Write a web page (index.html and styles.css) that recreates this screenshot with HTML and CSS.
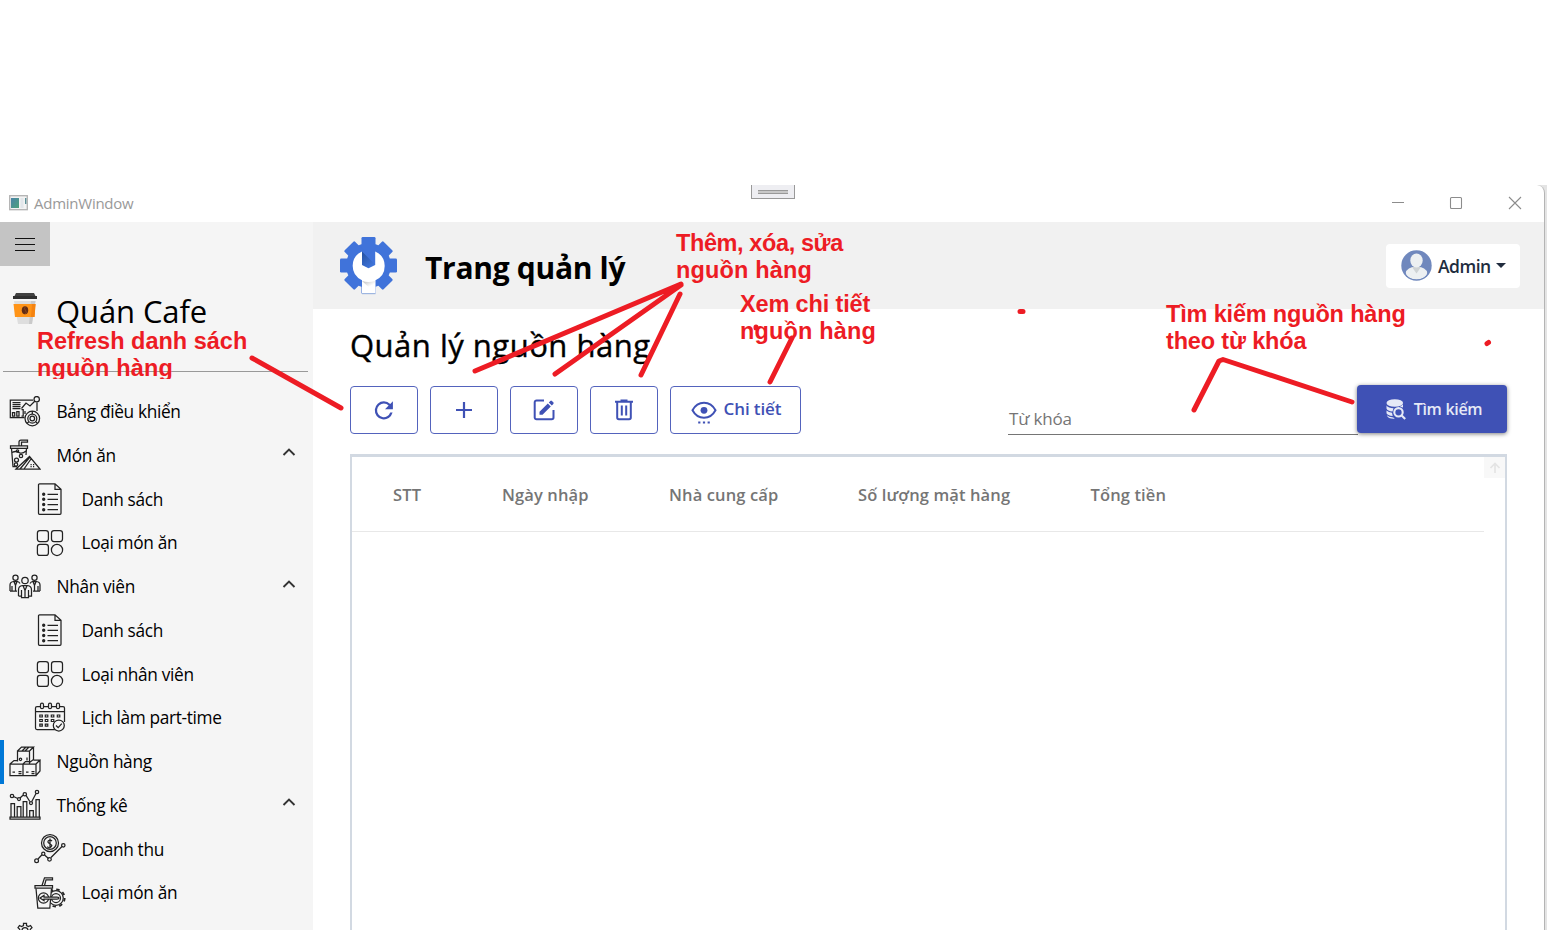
FILE: index.html
```html
<!DOCTYPE html>
<html lang="vi">
<head>
<meta charset="utf-8">
<title>AdminWindow</title>
<link rel="stylesheet" href="styles.css">
</head>
<body>
<svg class="defs" width="0" height="0">
  <symbol id="list" viewBox="0 0 32 32"><path d="M5.500.8H21l6 5.500V30.300a1 1 0 0 1-1 1H5.500a1 1 0 0 1-1-1V1.800a1 1 0 0 1 1-1ZM21 .8V6.300h6"/><path d="M13.500 11.300h10.500M13.500 16.300h10.500M13.500 21.500h10.500M13.500 26.700h10.500"/><g stroke-width="1.600"><circle cx="9.700" cy="11.300" r=".9"/><circle cx="9.700" cy="16.300" r=".9"/><circle cx="9.700" cy="21.500" r=".9"/><circle cx="9.700" cy="26.700" r=".9"/></g></symbol>
  <symbol id="grid" viewBox="0 0 32 32"><rect x="3.400" y="3.600" width="11" height="11" rx="2.500"/><rect x="17.500" y="3.600" width="11" height="11" rx="2.500"/><rect x="3.400" y="17.400" width="11" height="11" rx="2.500"/><circle cx="23" cy="22.900" r="5.600"/></symbol>
  <symbol id="up" viewBox="0 0 14 10"><path d="M1.500 8 7 2.500 12.500 8"/></symbol>
</svg>

<div class="window">
  <div class="titlebar">
    <svg class="appicon" width="19" height="16" viewBox="0 0 19 16"><defs><linearGradient id="ai" x2="1" y2="1"><stop stop-color="#4a83a8"/><stop offset="1" stop-color="#4da27a"/></linearGradient></defs><rect x=".7" y=".7" width="17.600" height="14" fill="#f3f3f3" stroke="#b2b2b2" stroke-width="1.300"/><rect x="2" y="3" width="8" height="10" fill="url(#ai)"/><rect x="11.500" y="3" width="3" height="10" fill="#e2e6ea"/><rect x="16" y="3" width="1.400" height="6" fill="#5c9097"/></svg>
    <span class="wname">AdminWindow</span>
    <div class="controls">
      <svg width="14" height="14" viewBox="0 0 14 14"><path d="M1 6.500h12"/></svg>
      <svg width="14" height="14" viewBox="0 0 14 14"><rect x="1.500" y="1.500" width="11" height="11" rx="1"/></svg>
      <svg width="14" height="14" viewBox="0 0 14 14"><path d="m1 1 12 12M13 1 1 13"/></svg>
    </div>
    <div class="grip"><i></i></div>
  </div>

  <div class="body">
    <aside class="sidebar">
      <div class="burger"><i></i><i></i><i></i></div>
      <div class="brand">
        <svg width="26" height="34" viewBox="0 0 26 34"><path d="M2 9h21.500L20 32H6Z" fill="#dedede"/><path d="M19 9h4.500L20 32h-3Z" fill="#cacaca"/><path d="M1.500 12h22l-1 13H3Z" fill="#ff9418"/><path d="M20 12h3.500l-1 13h-3.500Z" fill="#f58310"/><path d="M4 1h18l1.500 3H25v3H1V4h1.500Z" fill="#414141"/><path d="M1 4h24v3H1Z" fill="#303030"/><ellipse cx="13" cy="18.300" rx="3.200" ry="4" fill="#622c14"/><path d="M13.500 14.500q-2 2 0 4t-.5 3.700" stroke="#8f4a22" fill="none" stroke-width=".8"/></svg>
        <span>Quán Cafe</span>
      </div>
      <hr>
      <nav>
        <div class="item">
          <svg class="ico" viewBox="0 0 32 32"><path d="M15.500 21.700H1.300V4H24M28 6.500V15M3.500 6.500h8M3.500 8.500h8M3.500 10.500h8M3.500 12.500h8M12.500 12.500 17 7l4 3 5-5"/><path d="M3.500 16.500h2.200v3.500H3.500ZM7.800 15.500H10V20H7.800ZM12.500 13.500h1.700V20h-1.700M16 15v3" /><circle cx="27.700" cy="3.200" r="2.700"/><circle cx="23.300" cy="22.500" r="7.300"/><circle cx="23.300" cy="22.500" r="4.500"/><circle cx="23.300" cy="22.500" r="2.300"/><path d="M23.300 15v3M18 27.500l2-2M28.500 27.500l-2-2"/></svg>
          <span>Bảng điều khiển</span>
        </div>
        <div class="item">
          <svg class="ico" viewBox="0 0 32 32"><path d="M1.500 6.800h17v2.500h-17ZM2.500 9.500 4 27.500h4M17.500 9.500 17 16M10 6.500V3q0-2 2-2h6.500v2h-6v3.500M3 13.500q4-2 7 0t7-1.500M7 30 20.500 17.500 31 30ZM11 30l10-12M15 30l7-10"/><circle cx="7.500" cy="21" r="2"/><circle cx="12" cy="17" r="1.700"/><circle cx="7" cy="25.500" r="1.700"/><circle cx="8.500" cy="12" r="1.200"/><path stroke-dasharray="1.200 1.300" d="M21.500 25.500h5M21.500 27.500h5"/></svg>
          <span>Món ăn</span><svg class="chev"><use href="#up"/></svg>
        </div>
        <div class="item sub"><svg class="ico"><use href="#list"/></svg><span>Danh sách</span></div>
        <div class="item sub"><svg class="ico"><use href="#grid"/></svg><span>Loại món ăn</span></div>
        <div class="item">
          <svg class="ico" viewBox="0 0 32 32"><circle cx="6.500" cy="6.800" r="2.600"/><circle cx="25.500" cy="6.800" r="2.600"/><circle cx="16" cy="9.500" r="3.200"/><path d="M1 20v-6q0-3 3.500-3.500h4q1.500.4 2.500 2M31 20v-6q0-3-3.500-3.500h-4q-1.500.4-2.500 2M1 20h2v-5M31 20h-2v-5M3 20h5M29 20h-5M9.500 25v-6q0-4 4-4.500h5q4 .5 4 4.500v6h-3v-6M9.500 25h3v-6M12.500 25v1.500h7V25M14 14.500l2 5 2-5M16 19.500V26M5 10.500l1.500 4 1.500-4M24 10.500l1.500 4 1.500-4M6.500 14v6M25.500 14v6"/></svg>
          <span>Nhân viên</span><svg class="chev"><use href="#up"/></svg>
        </div>
        <div class="item sub"><svg class="ico"><use href="#list"/></svg><span>Danh sách</span></div>
        <div class="item sub"><svg class="ico"><use href="#grid"/></svg><span>Loại nhân viên</span></div>
        <div class="item sub">
          <svg class="ico" viewBox="0 0 32 32"><path d="M22 27.500H3q-1.500 0-1.500-1.500V6q0-1.500 1.500-1.500h3M10 4.500h4M18 4.500h4M26 4.500h3q1.500 0 1.500 1.500v14M1.500 9.500h29"/><rect x="6.500" y="1.200" width="3" height="5.500" rx="1.500"/><rect x="14.500" y="1.200" width="3" height="5.500" rx="1.500"/><rect x="22.500" y="1.200" width="3" height="5.500" rx="1.500"/><g stroke-width="1.200"><path d="M5.800 13h2.500v2H5.800ZM11.300 13h2.500v2h-2.500ZM17.300 13h2.500v2h-2.500ZM23.300 13h2.500v2h-2.500ZM5.800 17.500h2.500v2H5.800ZM11.300 17.500h2.500v2h-2.500ZM17.300 17.500h2.500v2h-2.500ZM5.800 22.200h2.500v2H5.800ZM11.300 22.200h2.500v2h-2.500Z"/></g><circle cx="24.800" cy="23.500" r="5.500" fill="#f5f5f5"/><path d="m22 23.500 2.200 2.200 3.600-4"/></svg>
          <span>Lịch làm part-time</span>
        </div>
        <div class="item active">
          <svg class="ico" viewBox="0 0 32 32"><path d="M8.500 15.500V5h12v12.500M8.500 5l4-4h12l-4 4M24.500 1v12.500l-4 3M13 5l4-4M16 5l4-4M1 18h13v11.500H1ZM14 18h13v11.500H14ZM1 18l4-3.500h3.500M14 18l2.500-2.500h4M27 18l4-4h-6.500M31 14v11l-4 4.500"/><path d="M3.500 26H6M9.500 25.500h3M9.500 27.500h3M17 26h2.500M22.500 25.500h3M22.500 27.500h3M18 11.500v3"/><circle cx="11.500" cy="13.300" r="1.200"/></svg>
          <span>Nguồn hàng</span>
        </div>
        <div class="item">
          <svg class="ico" viewBox="0 0 32 32"><path d="M1 28h30v2H1ZM2 27.500V14.500h3.500v13M8.200 27.500v-10h3.700v10M14.200 27.500v-15h3.600v15M20.700 27.500v-6h3.600v6M27 27.500v-17h3.300v17M4.500 7.500 8.700 9.500M11 9l3-2.800M17 6.300 20.800 12.500M22.800 12.500 27 4.500"/><circle cx="3" cy="7" r="1.700"/><circle cx="10" cy="10" r="1.500"/><circle cx="15.800" cy="5.200" r="1.700"/><circle cx="22" cy="14" r="1.500"/><circle cx="28" cy="3" r="1.700"/></svg>
          <span>Thống kê</span><svg class="chev"><use href="#up"/></svg>
        </div>
        <div class="item sub">
          <svg class="ico" viewBox="0 0 32 32"><circle cx="16" cy="10" r="8.500"/><circle cx="16" cy="10" r="6.300"/><path d="M18 8q-1.500-1.500-3.200-.5t0 2.500 2.700 2-1 2.200-3-.7M16 5.500v9M4 26l4-4.200M10.500 22l4 3.500M17 24.500 28 13.500"/><circle cx="2.600" cy="27.700" r="1.900"/><circle cx="9.300" cy="20.800" r="1.600"/><circle cx="15.500" cy="26.300" r="1.800"/><circle cx="29.300" cy="12.300" r="1.700"/></svg>
          <span>Doanh thu</span>
        </div>
        <div class="item sub">
          <svg class="ico" viewBox="0 0 32 32"><circle cx="22" cy="21" r="8.700" stroke-width="1.800" stroke-dasharray="3.400 3.430"/><circle cx="22" cy="21" r="7.300"/><circle cx="22" cy="21" r="4.500"/><path fill="#f5f5f5" d="M2 11.500l1.800 19.700h12L17.500 11.500"/><path fill="#f5f5f5" d="M1 8.700h17.500v2.500H1Z"/><path d="M8 8.500l2.500-7.700h8v2h-6.500L10.500 8.500"/><circle cx="9.500" cy="21" r="5.200"/><path fill="#f5f5f5" d="m6 21 4-2.500v1.500h13q2 0 2 1t-2 1H10v1.500Z"/></svg>
          <span>Loại món ăn</span>
        </div>
        <div class="item">
          <svg class="ico last" viewBox="0 0 32 32"><path d="M14.500 3.500V1.300h3v2.200l2 1 2-1 1.500 2.200-1.700 1.500v2.500L23 11l-1.700 2.500-2-1-1.800 1.300v2h-3v-2l-1.800-1.300-2 1L9 11l1.700-1.300V7.200L9 5.700l1.500-2.200 2 1Z"/><circle cx="16" cy="8.500" r="3"/></svg>
        </div>
      </nav>
    </aside>

    <main>
      <header>
        <svg class="gear" width="57" height="58" viewBox="0 0 57 58"><defs><linearGradient id="sh" x2=".7" y2="1"><stop stop-color="#2450a0"/><stop offset="1" stop-color="#4176dc"/></linearGradient><linearGradient id="hs" y2="1" x2=".6"><stop stop-color="#bbb"/><stop offset=".6" stop-color="#fff"/></linearGradient></defs>
        <g fill="#4073da"><circle cx="28.500" cy="28.500" r="22.500"/><rect x="21.500" y="0" width="14" height="57" rx="1.200"/><rect x="0" y="21.500" width="57" height="14" rx="1.200"/><rect x="21.200" y="1" width="14.600" height="55" rx="1.200" transform="rotate(45 28.500 28.500)"/><rect x="21.200" y="1" width="14.600" height="55" rx="1.200" transform="rotate(-45 28.500 28.500)"/></g>
        <path fill="url(#sh)" d="M22 14.500 35.500 28v3H22Z"/><path fill="#fff" d="M22 14.500V28l6.500 3.300 6.700-3.300V14.500A15.700 15.700 0 0 1 35.500 43.200V56.500H22V43.200A15.700 15.700 0 0 1 22 14.500Z"/><path d="M22 44q6.500 2 13 0v12Z" fill="url(#hs)"/><path d="M22 56.700h13.500" stroke="#9eb5dd"/></svg>
        <h1>Trang quản lý</h1>
        <div class="user">
          <svg width="31" height="31" viewBox="0 0 31 31"><defs><clipPath id="av"><circle cx="15.500" cy="15.500" r="14"/></clipPath></defs><circle cx="15.500" cy="15.500" r="15.200" fill="#7088bd"/><g clip-path="url(#av)"><ellipse cx="15.500" cy="23" rx="10.700" ry="6.500" fill="#edf0f2"/><path d="m11 17 9 0-4.500 6.500Z" fill="#cfd3d5"/><ellipse cx="15.500" cy="10.500" rx="6.200" ry="7" fill="#edf0f2"/></g></svg>
          <span>Admin</span><i></i>
        </div>
      </header>
      <section class="content">
        <h2>Quản lý nguồn hàng</h2>
        <div class="toolbar">
          <button><svg width="24" height="24" viewBox="0 0 24 24"><path fill="currentColor" d="M17.650 6.350A7.960 7.960 0 0 0 12 4a8 8 0 1 0 7.730 10h-2.080A6 6 0 1 1 12 6c1.660 0 3.140.69 4.220 1.780L13 11h7V4l-2.350 2.350Z" transform="translate(-1.700 -1.200) scale(1.130)"/></svg></button>
          <button><svg width="24" height="24" viewBox="0 0 24 24"><path d="M4 12h16M12 4v16" stroke="currentColor" stroke-width="2.200"/></svg></button>
          <button><svg width="24" height="24" viewBox="0 0 24 24"><path fill="none" stroke="currentColor" stroke-width="2" d="M12 2.500H4.500A1.800 1.800 0 0 0 2.700 4.300v15.200a1.800 1.800 0 0 0 1.800 1.800h15.200a1.800 1.800 0 0 0 1.800-1.800V12"/><path fill="currentColor" d="M7.500 13.700v3h3l8.300-8.300-3-3ZM16.800 4.400l1.500-1.500q.8-.8 1.600 0l1.400 1.400q.8.800 0 1.600l-1.500 1.500Z"/></svg></button>
          <button><svg width="24" height="24" viewBox="0 0 24 24"><path fill="none" stroke="currentColor" stroke-width="2" d="M3 3.700h18M8.500 2.500h7M5.200 4v15.600q0 1.700 1.700 1.700h10.200q1.700 0 1.700-1.700V4M9.800 7.500v10M14.200 7.500v10"/></svg></button>
          <button class="detail"><svg width="26" height="26" viewBox="0 0 26 26"><path fill="none" stroke="currentColor" stroke-width="2" d="M1.500 11.300Q5.500 3.800 13 3.800t11.500 7.500Q20.500 18.800 13 18.800T1.500 11.300Z"/><circle cx="13" cy="11.300" r="3.400" fill="currentColor"/><path fill="currentColor" d="M7.200 22.500h2.200v2H7.200zM11.900 22.500h2.200v2h-2.200zM16.600 22.500h2.200v2h-2.200z"/></svg><span>Chi tiết</span></button>
          <div class="field">Từ khóa</div>
          <button class="search"><svg width="20" height="21" viewBox="0 0 20 21" fill="#e6e9f6"><ellipse cx="8.800" cy="4" rx="8.300" ry="3.800"/><path d="M.5 6.500q2 2.700 7 2.700L6.500 12.500Q1.500 12 .5 9.500ZM.5 11.500q2 2 5.500 2.300l.7 3.200Q1.500 16.500.5 14.200ZM17 5.500v3l-3-.8Z M.8 16.200q2 1.800 6.500 2.300l1.500 1.200Q2 20 .8 16.200Z"/><circle cx="12.500" cy="13.300" r="4.200" fill="#3f51b5" stroke="#e6e9f6" stroke-width="2.100"/><path d="m15.700 16.500 3.500 3.500" stroke="#e6e9f6" stroke-width="2.100"/></svg><span>Tìm kiếm</span></button>
        </div>
        <div class="table">
          <div class="thead"><span>STT</span><span>Ngày nhập</span><span>Nhà cung cấp</span><span>Số lượng mặt hàng</span><span>Tổng tiền</span></div>
          <div class="scroll"><svg width="12" height="12" viewBox="0 0 12 12"><path d="M6 11V2M1.500 6 6 1.500 10.500 6" fill="none" stroke="#e4e4e4" stroke-width="1.700"/></svg></div>
        </div>
      </section>
    </main>
  </div>
</div>
<div class="edge"></div>

<p class="note n1">Refresh danh sách<br><span>nguồn hàng</span></p>
<p class="note n2">Thêm, xóa, sửa<br><span>nguồn hàng</span></p>
<p class="note n3">Xem chi tiết<br><span>nguồn hàng</span></p>
<p class="note n4">Tìm kiếm nguồn hàng<br>theo từ khóa</p>
<svg class="marks" width="1552" height="930" viewBox="0 0 1552 930"><path d="m252 358 89 50M681 284 475 371M681 285 555 374M680 294 641 375M792 338 770 382M1194 410 1219 361 1223 359.500 1352 402M1020 311.500h3M756 327v1M1487 343.500l1.500-1"/></svg>
</body>
</html>
```

FILE: styles.css
```css
* { box-sizing: border-box; }
body { margin: 0; height: 930px; overflow: hidden; background: #fff; position: relative; padding-top: 185px; font-family: "Open Sans", "Noto Sans", sans-serif; color: #000; }
.defs { position: absolute; }
.window { width: 1545px; height: 745px; border-right: 1px solid #b4b4b4; border-top-left-radius: 8px; border-top-right-radius: 8px; overflow: hidden; background: #fff; position: relative; z-index: 1; }
.edge { position: absolute; top: 185px; right: 5px; width: 12px; height: 745px; background: #e4e4e4; }
.titlebar { height: 37px; display: flex; align-items: center; padding: 0 0 2px 9px; position: relative; }
.wname { margin-left: 6px; font-size: 15px; color: #999; letter-spacing: -.25px; }
.controls { margin-left: auto; margin-right: 22px; display: flex; gap: 44.500px; }
.controls svg { display: block; fill: none; stroke: #8c8c8c; stroke-width: 1.100; }
.controls svg:nth-child(2) { margin-left: -1px; margin-right: 1px; }
.grip { position: absolute; left: 751px; top: 0; width: 44px; height: 14px; border: 1px solid #999; border-top: 0; background: #eeeef2; display: flex; justify-content: center; padding-top: 5px; }
.grip i { width: 30px; height: 4px; border-top: 1px solid #999; border-bottom: 1px solid #999; background: #c8c8c8; }
.body { display: flex; height: 708px; }
.sidebar { width: 313px; background: #f5f5f5; flex: none; }
.burger { width: 50px; height: 44px; background: #c4c4c4; display: flex; flex-direction: column; align-items: center; justify-content: center; gap: 5px; }
.burger i { width: 20px; height: 1px; background: #111; }
.brand { display: flex; padding: 26px 0 0 12px; height: 105px; }
.brand span { margin-left: 18px; font-size: 31px; line-height: 38px; letter-spacing: -.1px; }
.sidebar hr { margin: 0 5px 0 3px; border: 0; height: 1px; background: #999; }
nav { padding-top: 17.800px; }
.item { height: 43.750px; display: flex; align-items: center; padding-left: 9px; font-size: 17.300px; letter-spacing: -.35px; }
.item span { margin-left: .5px; }
.item.sub { padding-left: 34px; }
.item.active { box-shadow: inset 4px 0 #0078d7; }
.ico { width: 32px; height: 32px; flex: none; margin-right: 15px; fill: none; stroke: #222; stroke-width: 1.250; }
.last { margin-top: 3px; }
.chev { width: 14px; height: 10px; margin: -6px 17px 0 auto; fill: none; stroke: #333; stroke-width: 1.900; }
main { flex: 1; min-width: 0; }
header { height: 87px; background: #f1f1f1; display: flex; align-items: center; padding: 0 24px 0 27px; }
h1 { margin: 5px 0 0 28px; font-size: 30px; line-height: 40px; font-weight: 700; letter-spacing: -.3px; }
.user { margin-left: auto; width: 134px; height: 44px; border-radius: 4px; background: #fff; display: flex; align-items: center; padding-left: 15px; font-size: 17.500px; font-weight: 600; color: #212c3e; }
.user span { margin-left: 6px; letter-spacing: -.5px; }
.user i { margin-left: 5px; border: 5px solid transparent; border-top-color: #212c3e; border-bottom: 0; }
.content { padding: 14px 37px 0; }
h2 { margin: 0; font-size: 31px; line-height: 44px; font-weight: 500; letter-spacing: .5px; -webkit-text-stroke: .4px #000; white-space: nowrap; }
.toolbar { margin-top: 18px; display: flex; gap: 12px; height: 50px; align-items: flex-start; padding-top: 1px; }
button { width: 68px; height: 48px; border: 1.500px solid #5463bd; border-radius: 4px; background: #fff; color: #3f51b5; display: flex; align-items: center; justify-content: center; padding: 0; font: 600 17px "Open Sans", "Noto Sans", sans-serif; }
button svg { flex: none; display: block; }
.detail { width: 131px; gap: 7px; }
.detail svg { margin-top: 3px; margin-left: 1px; }
.detail span { margin-top: -4px; letter-spacing: -.1px; }
.field { margin-left: auto; margin-right: -13px; width: 350px; height: 49px; border-bottom: 1px solid #757575; color: #757575; font-size: 17px; line-height: 24px; padding: 21px 0 0 1px; font-weight: 400; letter-spacing: -.2px; }
.search { width: 150px; background: #3f51b5; color: #e6e9f6; border: 0; gap: 8px; margin-top: -1px; font-size: 16px; letter-spacing: -.3px; box-shadow: 0 1px 4px rgba(0,0,0,.5); }
.search svg { margin-left: 4px; margin-top: 1px; }
.table { margin-top: 19px; height: 500px; border: 2px solid #d2d9e2; border-top-width: 3px; display: flex; align-items: flex-start; }
.thead { width: 1132px; height: 75px; border-bottom: 1px solid #e8e8e8; display: grid; grid-template-columns: 109px 167px 189px 232.500px auto; padding-left: 41px; align-items: center; font-size: 16.500px; letter-spacing: .12px; font-weight: 600; color: #757575; white-space: nowrap; }
.scroll { width: 21px; height: 21px; background: #f8f8f8; display: flex; align-items: center; justify-content: center; }
.note { position: absolute; z-index: 3; margin: 0; color: #ed1c24; font: bold 23.500px/27px "Liberation Sans", Arial, sans-serif; white-space: nowrap; }
.note span { letter-spacing: .15px; }
.n1 { left: 37px; top: 328px; height: 51px; overflow: hidden; }
.n2 { left: 676px; top: 230px; letter-spacing: -.4px; }
.n3 { left: 740px; top: 291px; letter-spacing: -.15px; }
.n4 { left: 1166px; top: 301px; letter-spacing: -.17px; }
.marks { position: absolute; left: 0; top: 0; z-index: 4; fill: none; stroke: #ed1c24; stroke-width: 5; stroke-linecap: round; stroke-linejoin: round; }
```
